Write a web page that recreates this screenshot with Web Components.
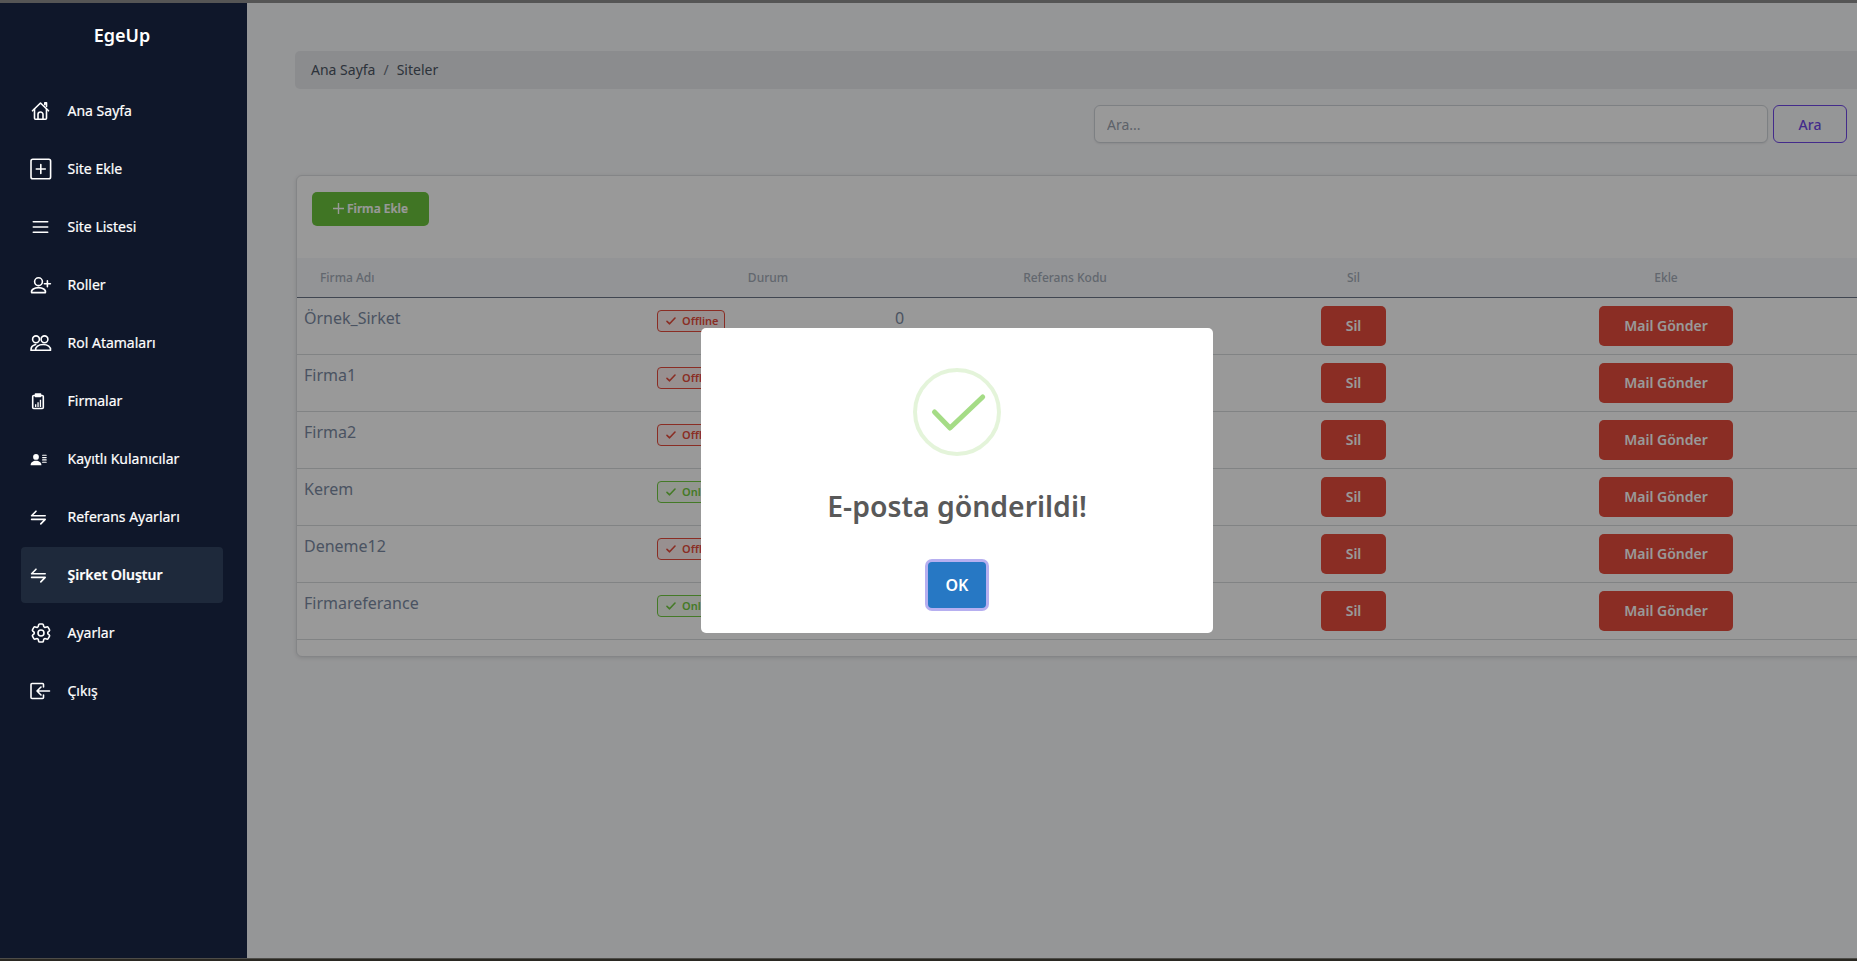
<!DOCTYPE html>
<html lang="tr">
<head>
<meta charset="utf-8">
<title>EgeUp</title>
<style>
  html, body { margin: 0; height: 100%; overflow: hidden; }
  body { font-family: "Noto Sans", "Open Sans", sans-serif; background: #f9fafc; }
</style>
</head>
<body>
<app-shell>
  <side-bar slot="side" brand="EgeUp">
    <nav-item icon="home" label="Ana Sayfa"></nav-item>
    <nav-item icon="add" label="Site Ekle"></nav-item>
    <nav-item icon="list" label="Site Listesi"></nav-item>
    <nav-item icon="userplus" label="Roller"></nav-item>
    <nav-item icon="users" label="Rol Atamaları"></nav-item>
    <nav-item icon="clipboard" label="Firmalar"></nav-item>
    <nav-item icon="userlines" label="Kayıtlı Kulanıcılar"></nav-item>
    <nav-item icon="swap" label="Referans Ayarları"></nav-item>
    <nav-item icon="swap" label="Şirket Oluştur" active></nav-item>
    <nav-item icon="gear" label="Ayarlar"></nav-item>
    <nav-item icon="exit" label="Çıkış"></nav-item>
  </side-bar>
  <bread-crumb first="Ana Sayfa" second="Siteler"></bread-crumb>
  <search-box></search-box>
  <firma-card>
    <firma-row name="Örnek_Sirket" status="Offline" ref="0"></firma-row>
    <firma-row name="Firma1" status="Offline"></firma-row>
    <firma-row name="Firma2" status="Offline"></firma-row>
    <firma-row name="Kerem" status="Online"></firma-row>
    <firma-row name="Deneme12" status="Offline"></firma-row>
    <firma-row name="Firmareferance" status="Online"></firma-row>
  </firma-card>
</app-shell>
<alert-dialog title-text="E-posta gönderildi!" button="OK"></alert-dialog>

<script>
const ICONS = {
  home: '<path d="M2.5 10.8 10.5 3l8 7.8"/><path d="M4.5 9v9.3a1 1 0 0 0 1 1h10a1 1 0 0 0 1-1V9"/><path d="M8 19.3v-4.8a2.5 2.5 0 0 1 5 0v4.8"/><path d="M14.8 4.6V2.8h1.7v3.6"/>',
  add: '<rect x="1" y="1.2" width="19.6" height="19.6" rx="1.8"/><path d="M10.8 6.5v9M6.3 11h9"/>',
  list: '<path d="M3.3 5.7h14.4M3.3 11h14.4M3.3 16.3h14.4"/>',
  userplus: '<circle cx="8.5" cy="7.7" r="3.9"/><path d="M1.6 18.6c-.8-3 3-5 6.9-5s7.700 2 6.900 5z"/><path d="M17.400 6.800v6M14.400 9.800h6"/>',
  users: '<circle cx="6" cy="7.300" r="3.400"/><circle cx="14.500" cy="7.300" r="3.400"/><path d="M1.200 18.300c-.6-3 1.600-5 4.400-5.800"/><path d="M1.200 18.300h4"/><path d="M5.600 18.300c-.5-3.400 3-5.800 7.500-5.800s8 2.400 7.400 5.800z"/>',
  clipboard: '<rect x="2.700" y="5.500" width="10.600" height="13" rx="1"/><path d="M5.500 4h5v2.500h-5z" fill="#fff"/><path d="M5 14.200h1.300V17H5zM7.400 12.200h1.300V17H7.400zM9.800 9.800h1.300V17H9.800z" fill="#fff" stroke="none"/>',
  userlines: '<circle cx="6" cy="8.900" r="2.900" fill="#fff" stroke="none"/><path d="M.6 17.200c0-3 2.400-4.500 5.400-4.500s5.400 1.500 5.400 4.500z" fill="#fff" stroke="none"/><path d="M12.600 7.300h3.600M12.600 9.600h3.600M12.600 11.900h3.600M12.600 14.200h3.600" stroke-width="1.100"/>',
  swap: '<path d="M6 5.200 1.600 9.700h13.600"/><path d="M1.600 13.400h13.600l-4.400 4.500"/>',
  gear: '<g transform="translate(-1 -1)"><path d="M9.594 3.940c.09-.542.56-.94 1.110-.94h2.593c.55 0 1.020.398 1.110.94l.213 1.281c.063.374.313.686.645.870.074.04.147.083.22.127.325.196.72.257 1.075.124l1.217-.456a1.125 1.125 0 0 1 1.370.49l1.296 2.247a1.125 1.125 0 0 1-.26 1.431l-1.003.827c-.293.241-.438.613-.43.992a7.723 7.723 0 0 1 0 .255c-.008.378.137.75.43.991l1.004.827c.424.35.534.955.26 1.430l-1.298 2.247a1.125 1.125 0 0 1-1.369.491l-1.217-.456c-.355-.133-.75-.072-1.076.124a6.470 6.470 0 0 1-.22.128c-.331.183-.581.495-.644.869l-.213 1.281c-.09.543-.56.94-1.110.94h-2.594c-.55 0-1.019-.398-1.110-.94l-.213-1.281c-.062-.374-.312-.686-.644-.87a6.520 6.520 0 0 1-.22-.127c-.325-.196-.72-.257-1.076-.124l-1.217.456a1.125 1.125 0 0 1-1.369-.49l-1.297-2.247a1.125 1.125 0 0 1 .26-1.431l1.004-.827c.292-.24.437-.613.43-.991a6.932 6.932 0 0 1 0-.255c.007-.38-.138-.751-.43-.992l-1.004-.827a1.125 1.125 0 0 1-.26-1.430l1.297-2.247a1.125 1.125 0 0 1 1.370-.491l1.216.456c.356.133.751.072 1.076-.124.072-.044.146-.086.22-.128.332-.183.582-.495.644-.869l.214-1.280Z"/><circle cx="12" cy="12" r="3"/></g>',
  exit: '<path d="M13.500 7V4.500a1 1 0 0 0-1-1H2a1 1 0 0 0-1 1v13a1 1 0 0 0 1 1h10.500a1 1 0 0 0 1-1V15"/><path d="M19.500 11H7l4-4M7 11l4 4"/>'
};

class AppShell extends HTMLElement {
  constructor() {
    super();
    this.attachShadow({mode: 'open'});
  }

  connectedCallback() {
    this.shadowRoot.innerHTML = `
      <style>
        :host { display: flex; flex-direction: column; height: 100vh; }
        .top { height: 3px; flex: none; background: #555; position: relative; z-index: 2; }
        .bottom { height: 3px; flex: none; background: #2a2822; border-top: 1px solid #4d4c48; box-sizing: border-box; position: relative; z-index: 2; }
        .middle { flex: 1; display: flex; min-height: 0; }
        .content { flex: 1; min-width: 0; overflow: hidden; padding: 48px 0 0 48px; }
        .inner { width: 1577px; }
      </style>
      <div class="top"></div>
      <div class="middle">
        <slot name="side"></slot>
        <div class="content"><div class="inner"><slot></slot></div></div>
      </div>
      <div class="bottom"></div>
    `;
  }
}

class SideBar extends HTMLElement {
  constructor() {
    super();
    this.attachShadow({mode: 'open'});
  }

  connectedCallback() {
    this.shadowRoot.innerHTML = `
      <style>
        :host { display: block; width: 247px; flex: none; background: #0f172a; position: relative; z-index: 2; }
        h1 { margin: 0; height: 80px; padding: 19px 3px 0 0; box-sizing: border-box; text-align: center; font-size: 18px; line-height: 26px; font-weight: 600; color: #fff; }
        nav { display: flex; flex-direction: column; gap: 2px; padding-left: 21px; }
      </style>
      <h1>${this.getAttribute('brand')}</h1>
      <nav><slot></slot></nav>
    `;
  }
}

class NavItem extends HTMLElement {
  constructor() {
    super();
    this.attachShadow({mode: 'open'});
  }

  connectedCallback() {
    this.shadowRoot.innerHTML = `
      <style>
        :host { display: flex; align-items: center; gap: 15.500px; width: 202px; height: 56px; padding-left: 9px; box-sizing: border-box; border-radius: 4px; color: #fff; font-size: 14px; font-weight: 400; -webkit-text-stroke: .2px #fff; }
        :host([active]) { background: #1e293b; font-weight: 600; }
        span { padding-bottom: 2px; }
        svg { flex: none; fill: none; stroke: #fff; stroke-width: 1.600; stroke-linecap: round; stroke-linejoin: round; }
      </style>
      <svg width="22" height="22" viewBox="0 0 22 22">${ICONS[this.getAttribute('icon')]}</svg>
      <span>${this.getAttribute('label')}</span>
    `;
  }
}

class BreadCrumb extends HTMLElement {
  constructor() {
    super();
    this.attachShadow({mode: 'open'});
  }

  connectedCallback() {
    this.shadowRoot.innerHTML = `
      <style>
        :host { display: flex; align-items: center; gap: 8px; height: 38px; padding: 0 0 2px 16px; box-sizing: border-box; background: #e8eaed; border-radius: 5px; font-size: 14px; color: #4b5563; }
        i { font-style: normal; color: #6b7280; }
      </style>
      <span>${this.getAttribute('first')}</span><i>/</i><span>${this.getAttribute('second')}</span>
    `;
  }
}

class SearchBox extends HTMLElement {
  constructor() {
    super();
    this.attachShadow({mode: 'open'});
  }

  connectedCallback() {
    this.shadowRoot.innerHTML = `
      <style>
        :host { display: flex; justify-content: flex-end; gap: 5px; margin: 16px 0 32px; padding-right: 25px; }
        input { width: 674px; height: 38px; padding: 0 12px; box-sizing: border-box; border: 1px solid #d1d5db; border-radius: 6px; background: #fff; box-shadow: 0 1px 2px rgba(0,0,0,.08); font: 14px "Noto Sans", sans-serif; }
        input::placeholder { color: #9ca3af; }
        button { width: 74px; height: 38px; border: 1px solid #7048e8; border-radius: 6px; background: transparent; color: #7048e8; font: 500 14px "Noto Sans", sans-serif; }
      </style>
      <input type="search" placeholder="Ara...">
      <button type="button">Ara</button>
    `;
  }
}

class FirmaCard extends HTMLElement {
  constructor() {
    super();
    this.attachShadow({mode: 'open'});
  }

  connectedCallback() {
    this.shadowRoot.innerHTML = `
      <style>
        :host { display: block; margin-left: 1px; padding: 16px 0; background: #fff; border: 1px solid #dcdee1; border-radius: 6px; box-shadow: 0 1px 4px rgba(0,0,0,.12); --cols: 352px 236px 360px 217px 408px; }
        .add { display: flex; align-items: center; justify-content: center; gap: 3px; width: 117px; height: 34px; margin-left: 15px; border: 0; border-radius: 5px; background: #6cc43c; color: #fff; font: 600 12px "Noto Sans", sans-serif; padding: 0 0 1px; -webkit-text-stroke: .2px #fff; }
        .add svg { fill: none; stroke: #fff; stroke-width: 1.400; }
        .head { display: grid; grid-template-columns: var(--cols); height: 39px; align-items: center; margin-top: 32px; background: #f5f7fa; border-bottom: 1px solid #6b7687; font-size: 12px; font-weight: 500; color: #a4acb8; text-align: center; box-sizing: content-box; }
        .head span:first-child { text-align: left; padding-left: 23px; }
        .head span:nth-child(2) { padding-left: 2px; }
      </style>
      <button class="add" type="button"><svg width="11" height="11" viewBox="0 0 11 11"><path d="M5.500 0v11M0 5.500h11"/></svg>Firma Ekle</button>
      <div class="head"><span>Firma Adı</span><span>Durum</span><span>Referans Kodu</span><span>Sil</span><span>Ekle</span></div>
      <slot></slot>
    `;
  }
}

class FirmaRow extends HTMLElement {
  constructor() {
    super();
    this.attachShadow({mode: 'open'});
  }

  connectedCallback() {
    const status = this.getAttribute('status');
    this.shadowRoot.innerHTML = `
      <style>
        :host { display: grid; grid-template-columns: var(--cols); height: 57px; padding-top: 8px; box-sizing: border-box; align-items: start; border-bottom: 1px solid #d8dadd; font-size: 16px; line-height: 24px; color: #7c8ba3; }
        .name { padding-left: 7px; }
        .ref { padding-left: 10px; }
        .status { display: flex; align-items: flex-start; padding: 4px 0 0 8px; }
        .action { display: flex; justify-content: center; }
        button { height: 40px; padding: 0 0 2px; border: 0; border-radius: 5px; background: #e74c3c; color: #fff; font: 600 14px "Noto Sans", sans-serif; }
        .del { width: 65px; }
        .mail { width: 134px; }
      </style>
      <div class="name">${this.getAttribute('name')}</div>
      <div class="status"><status-badge kind="${status}"></status-badge></div>
      <div class="ref">${this.getAttribute('ref') || ''}</div>
      <div class="action"><button class="del" type="button">Sil</button></div>
      <div class="action"><button class="mail" type="button">Mail Gönder</button></div>
    `;
  }
}

class StatusBadge extends HTMLElement {
  constructor() {
    super();
    this.attachShadow({mode: 'open'});
  }

  connectedCallback() {
    const kind = this.getAttribute('kind');
    const color = kind === 'Online' ? '#72cc41' : '#e74c3c';
    const tint = kind === 'Online' ? 'rgba(114,204,65,.08)' : 'rgba(231,76,60,.08)';
    this.shadowRoot.innerHTML = `
      <style>
        :host { display: inline-flex; align-items: center; gap: 6px; height: 22px; padding: 0 5px 0 8px; box-sizing: border-box; border: 1px solid ${color}; border-radius: 4px; background: ${tint}; color: ${color}; font-size: 11px; line-height: 20px; font-weight: 600; }
        svg { fill: none; stroke: ${color}; stroke-width: 1.600; stroke-linecap: round; stroke-linejoin: round; }
      </style>
      <svg width="10" height="8" viewBox="0 0 10 8"><path d="M1 4.300 3.600 6.800 9 1"/></svg>
      <span>${kind}</span>
    `;
  }
}

class AlertDialog extends HTMLElement {
  constructor() {
    super();
    this.attachShadow({mode: 'open'});
  }

  connectedCallback() {
    this.shadowRoot.innerHTML = `
      <style>
        :host { position: fixed; inset: 0 -57px 0 0; z-index: 1; display: flex; align-items: center; justify-content: center; background: rgba(0,0,0,.4); }
        .popup { width: 512px; height: 305px; display: flex; flex-direction: column; align-items: center; padding-top: 40px; box-sizing: border-box; background: #fff; border-radius: 5px; }
        svg { display: block; flex: none; }
        h2 { margin: 29.500px 0 0; font-size: 28.400px; line-height: 41px; font-weight: 600; color: #595959; }
        button { width: 58px; height: 46px; margin-top: 35.500px; padding: 0; border: 0; border-radius: 4px; background: #2778c4; color: #fff; font: 600 16px "Noto Sans", sans-serif; box-shadow: 0 0 0 3px #b6aff0; }
      </style>
      <div class="popup">
        <svg width="88" height="88" viewBox="0 0 88 88">
          <circle cx="44" cy="44" r="42" fill="none" stroke="#a5dc86" stroke-opacity=".3" stroke-width="4"/>
          <path d="M21.500 44 37 60 69.700 29" fill="none" stroke="#a5dc86" stroke-width="5" stroke-linecap="round" stroke-linejoin="round"/>
        </svg>
        <h2>${this.getAttribute('title-text')}</h2>
        <button type="button">${this.getAttribute('button')}</button>
      </div>
    `;
  }
}

customElements.define('app-shell', AppShell);
customElements.define('side-bar', SideBar);
customElements.define('nav-item', NavItem);
customElements.define('bread-crumb', BreadCrumb);
customElements.define('search-box', SearchBox);
customElements.define('firma-card', FirmaCard);
customElements.define('firma-row', FirmaRow);
customElements.define('status-badge', StatusBadge);
customElements.define('alert-dialog', AlertDialog);
</script>
</body>
</html>
